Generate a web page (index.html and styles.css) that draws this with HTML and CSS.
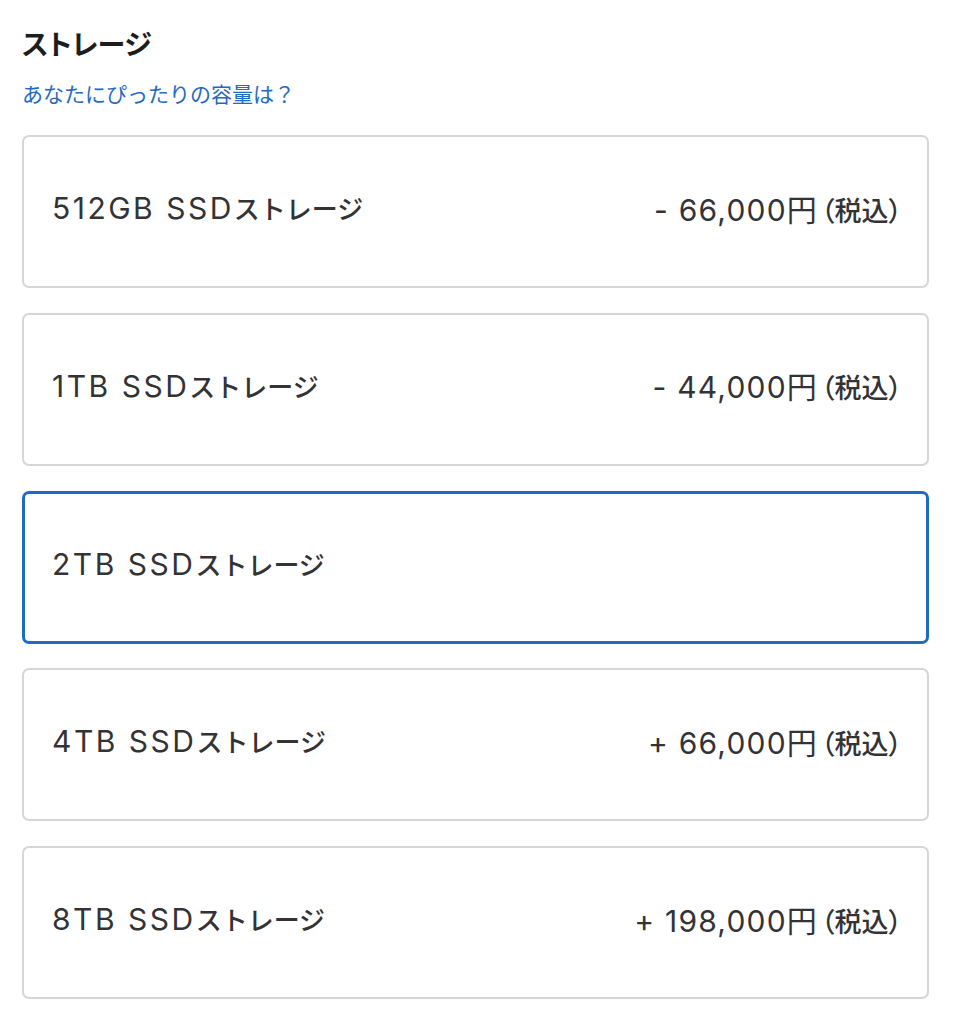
FILE: index.html
```html
<!DOCTYPE html>
<html lang="ja">
<head>
<meta charset="utf-8">
<title>ストレージ</title>
<link rel="stylesheet" href="styles.css">
</head>
<body>
<section class="storage">
  <h2 class="storage-title">ストレージ</h2>
  <a class="storage-help" href="#">あなたにぴったりの容量は？</a>
  <ul class="options">
    <li class="option">
      <span class="option-name"><span class="lat">512GB SSD</span>ストレージ</span>
      <span class="option-price"><span class="price">- 66,000円</span><span class="tax">（税込）</span></span>
    </li>
    <li class="option">
      <span class="option-name"><span class="lat">1TB SSD</span>ストレージ</span>
      <span class="option-price"><span class="price">- 44,000円</span><span class="tax">（税込）</span></span>
    </li>
    <li class="option option-selected">
      <span class="option-name"><span class="lat">2TB SSD</span>ストレージ</span>
    </li>
    <li class="option">
      <span class="option-name"><span class="lat">4TB SSD</span>ストレージ</span>
      <span class="option-price"><span class="price">+ 66,000円</span><span class="tax">（税込）</span></span>
    </li>
    <li class="option">
      <span class="option-name"><span class="lat">8TB SSD</span>ストレージ</span>
      <span class="option-price"><span class="price">+ 198,000円</span><span class="tax">（税込）</span></span>
    </li>
  </ul>
</section>
</body>
</html>
```

FILE: styles.css
```css
html, body {
  margin: 0;
  padding: 0;
  background: #ffffff;
}

body {
  font-family: "Noto Sans CJK JP", sans-serif;
  color: #1d1d1f;
}

.storage {
  width: 907px;
  padding: 24px 0 0 22px;
  display: flex;
  flex-direction: column;
}

.storage-title {
  margin: 0;
  font-size: 28px;
  line-height: 38px;
  font-weight: 700;
  color: #1d1d1f;
  font-feature-settings: "palt";
}

.storage-help {
  margin-top: 16px;
  font-size: 21px;
  line-height: 30px;
  color: #1f6bc2;
  text-decoration: none;
  align-self: flex-start;
}

.options {
  list-style: none;
  margin: 27px 0 0;
  padding: 0;
  display: flex;
  flex-direction: column;
  gap: 24.75px;
}

.option {
  box-sizing: border-box;
  height: 153px;
  border: 2px solid #d6d6d6;
  border-radius: 7px;
  padding: 0 25px 8px 28px;
  display: flex;
  align-items: center;
  justify-content: space-between;
  color: #333336;
  font-size: 26px;
  font-weight: 500;
}

.option-selected {
  border: 3px solid #1f6bc2;
  padding: 0 24px 8px 27px;
}

.option-name,
.option-price {
  white-space: nowrap;
}

.lat {
  font-family: Inter, "Noto Sans CJK JP", sans-serif;
  font-size: 30px;
  font-weight: 400;
  letter-spacing: 2.5px;
}

.price {
  font-family: Inter, "Noto Sans CJK JP", sans-serif;
  font-size: 30px;
  font-weight: 400;
  letter-spacing: 1.2px;
}

.tax {
  font-size: 27px;
  font-feature-settings: "palt";
  margin-left: 3px;
}
```
